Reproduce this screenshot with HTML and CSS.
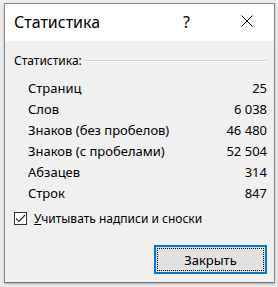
FILE: index.html
```html
<!DOCTYPE html>
<html lang="ru">
<head>
<meta charset="utf-8">
<link rel="stylesheet" href="styles.css">
</head>
<body>
<div class="window">
  <div class="titlebar">
    <span class="title">Статистика</span>
    <span class="help">?</span>
    <span class="close"><svg width="12" height="12" viewBox="0 0 12 12"><path d="M0.5 0.5 L11.5 11.5 M11.5 0.5 L0.5 11.5" stroke="#000" stroke-width="1" fill="none"/></svg></span>
  </div>
  <div class="content">
    <div class="group-head"><span>Статистика:</span><span class="rule"></span></div>
    <div class="stats">
      <div class="row"><span>Страниц</span><span>25</span></div>
      <div class="row"><span>Слов</span><span>6 038</span></div>
      <div class="row"><span>Знаков (без пробелов)</span><span>46 480</span></div>
      <div class="row"><span>Знаков (с пробелами)</span><span>52 504</span></div>
      <div class="row"><span>Абзацев</span><span>314</span></div>
      <div class="row"><span>Строк</span><span>847</span></div>
    </div>
    <label class="check">
      <span class="box"><svg width="11" height="11" viewBox="0 0 11 11"><path d="M1 5.5 L4 8.5 L10 2" stroke="#333" stroke-width="1.2" fill="none"/></svg></span>
      <span><u>У</u>читывать надписи и сноски</span>
    </label>
    <div class="actions">
      <button class="btn"><span class="focus">Закрыть</span></button>
    </div>
  </div>
</div>
</body>
</html>
```
FILE: styles.css
```css
html, body {
  margin: 0;
  padding: 0;
}
body {
  width: 278px;
  height: 287px;
  background: #ebebeb;
  padding: 3px 3px 4px 4px;
  box-sizing: border-box;
  font-family: "Noto Sans", "Segoe UI", sans-serif;
  font-size: 12px;
  color: #000;
}
.window {
  width: 271px;
  height: 280px;
  box-sizing: border-box;
  border: 1px solid #8a8a8a;
  border-bottom-color: #6e6e6e;
  background: #f0f0f0;
  box-shadow: 0 1px 2px rgba(0,0,0,0.25);
  display: flex;
  flex-direction: column;
}
.titlebar {
  height: 37px;
  background: #fff;
  display: flex;
  align-items: center;
  padding-left: 9px;
}
.title {
  font-size: 16px;
  flex: 1;
  margin-top: -1px;
}
.help {
  font-size: 16px;
  width: 10px;
  margin-right: 48px;
  margin-top: -2px;
}
.close {
  width: 12px;
  height: 12px;
  margin-right: 21px;
  margin-top: -3px;
  display: flex;
}
.content {
  flex: 1;
  padding: 11px 7px 0 9px;
  display: flex;
  flex-direction: column;
}
.group-head {
  display: flex;
  align-items: center;
  height: 17px;
}
.rule {
  flex: 1;
  height: 1px;
  background: #d7d7d7;
  border-bottom: 1px solid #fff;
  margin-left: 3px;
  margin-top: 1px;
}
.stats {
  margin-top: 8px;
  padding-left: 14px;
  display: flex;
  flex-direction: column;
  font-size: 13px;
}
.row {
  display: flex;
  justify-content: space-between;
  height: 21px;
  align-items: center;
}
.check {
  display: flex;
  align-items: center;
  gap: 7px;
  margin-top: 7px;
  height: 17px;
}
.box {
  width: 13px;
  height: 13px;
  box-sizing: border-box;
  border: 1px solid #333;
  background: #fff;
  display: flex;
  align-items: center;
  justify-content: center;
}
.actions {
  display: flex;
  justify-content: flex-end;
  margin-top: 18px;
}
.btn {
  width: 113px;
  height: 29px;
  box-sizing: border-box;
  border: 2px solid #0078d7;
  background: #e1e1e1;
  padding: 1px;
  font: inherit;
  font-size: 13px;
  color: #000;
  display: flex;
}
.focus {
  flex: 1;
  border: 1px dotted #000;
  display: flex;
  align-items: center;
  justify-content: center;
}
```
